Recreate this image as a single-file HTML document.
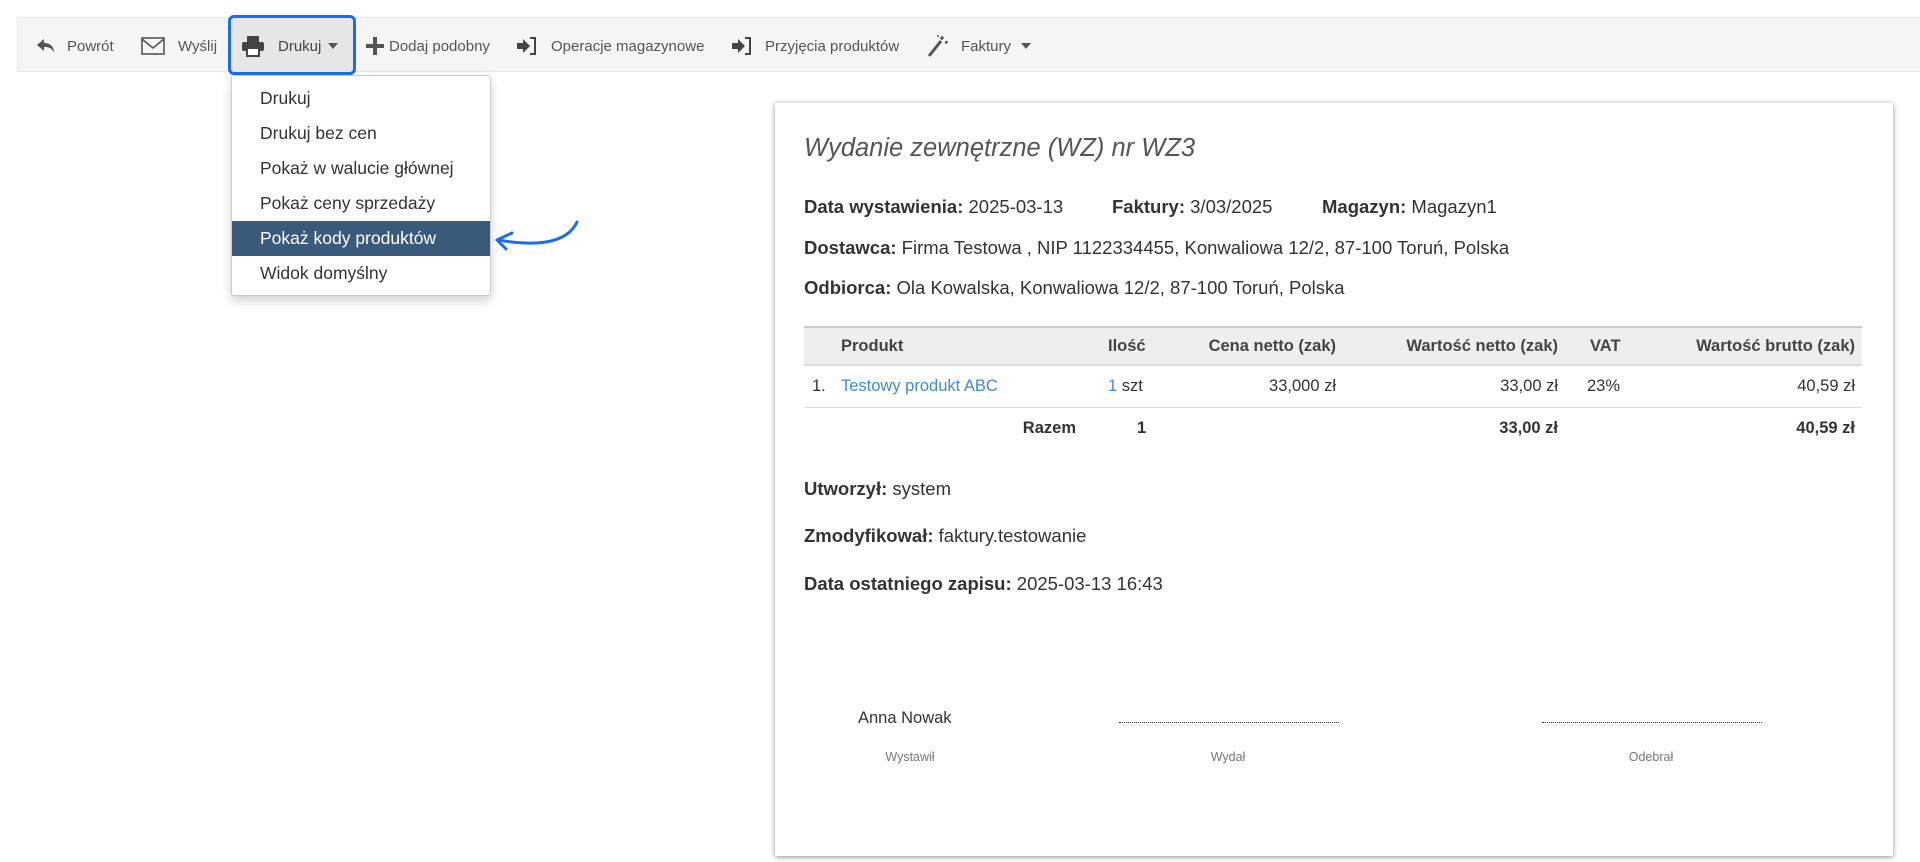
<!DOCTYPE html>
<html><head><meta charset="utf-8"><style>
*{box-sizing:border-box;margin:0;padding:0}
body{width:1920px;height:862px;background:#fff;font-family:"Liberation Sans",sans-serif;color:#333;position:relative;overflow:hidden}
.a{position:absolute;white-space:nowrap}
.tb{position:absolute;left:17px;top:17px;width:1910px;height:55px;background:#f5f5f5;border:1px solid #e6e6e6}
.t{position:absolute;top:38px;font-size:15px;color:#555;line-height:18px}
.dd{position:absolute;left:231px;top:75px;width:260px;height:221px;background:#fff;border:1px solid #ccc;border-radius:3px;box-shadow:0 5px 10px rgba(0,0,0,.18)}
.di{position:absolute;left:0;width:100%;height:35px;line-height:35px;padding-left:28px;font-size:17.5px;color:#333}
.pn{position:absolute;left:775px;top:103px;width:1118px;height:753px;background:#fff;box-shadow:0 1px 5px rgba(0,0,0,.45)}
.f{font-size:16.5px;line-height:20px}
.g{font-size:18.5px;line-height:20px}
b{font-weight:bold}
</style></head><body>
<div class="tb"></div>
<div class="a" style="left:228px;top:15px;width:128px;height:60px;background:#e6e6e6;border:3px solid #1a6ee8;border-radius:6px"></div>
<svg class="a" style="left:36px;top:37px" width="20" height="18" viewBox="0 0 20 18"><path d="M8 2L1 8l7 6V10c5 0 8 1 10 6 0-6-3-10-10-10z" fill="#555"/></svg>
<div class="t" style="left:67px">Powrót</div>
<svg class="a" style="left:141px;top:37px" width="24" height="18" viewBox="0 0 24 18"><rect x="1" y="1" width="22" height="16" fill="none" stroke="#555" stroke-width="1.6"/><path d="M1 2l11 9 11-9" fill="none" stroke="#555" stroke-width="1.6"/></svg>
<div class="t" style="left:178px">Wyślij</div>
<svg class="a" style="left:241px;top:35px" width="24" height="22" viewBox="0 0 24 22"><rect x="6" y="1" width="12" height="6" fill="#444"/><rect x="1" y="7" width="22" height="9" rx="2" fill="#444"/><rect x="6" y="13" width="12" height="8" fill="#fff" stroke="#444" stroke-width="2"/></svg>
<div class="t" style="left:278px;color:#444">Drukuj</div>
<svg class="a" style="left:328px;top:43px" width="10" height="6"><path d="M0 0h10L5 6z" fill="#555"/></svg>
<svg class="a" style="left:366px;top:37px" width="18" height="18"><path d="M7 0h4v7h7v4h-7v7H7v-7H0V7h7z" fill="#555"/></svg>
<div class="t" style="left:389px">Dodaj podobny</div>
<svg class="a" style="left:516px;top:37px" width="22" height="18" viewBox="0 0 22 18"><path d="M1 6h6V2l7 7-7 7v-4H1z" fill="#444"/><path d="M14 1h5v16h-5" fill="none" stroke="#444" stroke-width="2"/></svg>
<div class="t" style="left:551px">Operacje magazynowe</div>
<svg class="a" style="left:731px;top:37px" width="22" height="18" viewBox="0 0 22 18"><path d="M1 6h6V2l7 7-7 7v-4H1z" fill="#444"/><path d="M14 1h5v16h-5" fill="none" stroke="#444" stroke-width="2"/></svg>
<div class="t" style="left:765px">Przyjęcia produktów</div>
<svg class="a" style="left:926px;top:34px" width="24" height="24" viewBox="0 0 24 24"><path d="M3 22L15 7" stroke="#555" stroke-width="3"/><path d="M16 2v4M14 4h4M20 7v3M19 8h3M12 1v2" stroke="#555" stroke-width="1.5"/></svg>
<div class="t" style="left:961px">Faktury</div>
<svg class="a" style="left:1021px;top:43px" width="10" height="6"><path d="M0 0h10L5 6z" fill="#555"/></svg>

<div class="dd">
<div class="di" style="top:5px">Drukuj</div>
<div class="di" style="top:40px">Drukuj bez cen</div>
<div class="di" style="top:75px">Pokaż w walucie głównej</div>
<div class="di" style="top:110px">Pokaż ceny sprzedaży</div>
<div class="di" style="top:145px;background:#3a5a7c;color:#fff">Pokaż kody produktów</div>
<div class="di" style="top:180px">Widok domyślny</div>
</div>
<svg class="a" style="left:490px;top:215px" width="95" height="40"><path d="M87 7C80 22 60 34 8 25" fill="none" stroke="#1a6ee8" stroke-width="3" stroke-linecap="round"/><path d="M22 18L7 25l9 9" fill="none" stroke="#1a6ee8" stroke-width="3" stroke-linecap="round" stroke-linejoin="round"/></svg>

<div class="pn"></div>
<div class="a" style="left:804px;top:134px;font-size:25.5px;font-style:italic;color:#555">Wydanie zewnętrzne (WZ) nr WZ3</div>
<div class="a g" style="left:804px;top:197px"><b>Data wystawienia:</b> 2025-03-13</div>
<div class="a g" style="left:1112px;top:197px"><b>Faktury:</b> 3/03/2025</div>
<div class="a g" style="left:1322px;top:197px"><b>Magazyn:</b> Magazyn1</div>
<div class="a g" style="left:804px;top:238px"><b>Dostawca:</b> Firma Testowa , NIP 1122334455, Konwaliowa 12/2, 87-100 Toruń, Polska</div>
<div class="a g" style="left:804px;top:278px"><b>Odbiorca:</b> Ola Kowalska, Konwaliowa 12/2, 87-100 Toruń, Polska</div>
<div class="a" style="left:804px;top:326px;width:1058px;height:40px;background:#eee;border-top:2px solid #ccc;border-bottom:2px solid #ddd"></div>
<div class="a" style="left:804px;top:407px;width:1058px;height:1px;background:#ddd"></div>
<div class="a f" style="left:841px;top:336px;font-weight:bold;color:#444">Produkt</div>
<div class="a f" style="left:1108px;top:336px;font-weight:bold;color:#444">Ilość</div>
<div class="a f" style="right:584px;top:336px;font-weight:bold;color:#444">Cena netto (zak)</div>
<div class="a f" style="right:362px;top:336px;font-weight:bold;color:#444">Wartość netto (zak)</div>
<div class="a f" style="left:1590px;top:336px;font-weight:bold;color:#444">VAT</div>
<div class="a f" style="right:65px;top:336px;font-weight:bold;color:#444">Wartość brutto (zak)</div>
<div class="a f" style="left:812px;top:376px">1.</div>
<div class="a f" style="left:841px;top:376px;color:#428bca">Testowy produkt ABC</div>
<div class="a f" style="left:1108px;top:376px"><span style="color:#428bca">1</span> szt</div>
<div class="a f" style="right:584px;top:376px">33,000 zł</div>
<div class="a f" style="right:362px;top:376px">33,00 zł</div>
<div class="a f" style="left:1587px;top:376px">23%</div>
<div class="a f" style="right:65px;top:376px">40,59 zł</div>
<div class="a f" style="right:844px;top:418px;font-weight:bold">Razem</div>
<div class="a f" style="left:1137px;top:418px;font-weight:bold">1</div>
<div class="a f" style="right:362px;top:418px;font-weight:bold">33,00 zł</div>
<div class="a f" style="right:65px;top:418px;font-weight:bold">40,59 zł</div>
<div class="a g" style="left:804px;top:479px"><b>Utworzył:</b> system</div>
<div class="a g" style="left:804px;top:526px"><b>Zmodyfikował:</b> faktury.testowanie</div>
<div class="a g" style="left:804px;top:574px"><b>Data ostatniego zapisu:</b> 2025-03-13 16:43</div>
<div class="a f" style="left:858px;top:708px">Anna Nowak</div>
<div class="a" style="left:1119px;top:722px;width:220px;border-top:1.5px dotted #333"></div>
<div class="a" style="left:1542px;top:722px;width:220px;border-top:1.5px dotted #333"></div>
<div class="a" style="left:880px;top:750px;font-size:12.5px;color:#777;width:60px;text-align:center">Wystawił</div>
<div class="a" style="left:1198px;top:750px;font-size:12.5px;color:#777;width:60px;text-align:center">Wydał</div>
<div class="a" style="left:1621px;top:750px;font-size:12.5px;color:#777;width:60px;text-align:center">Odebrał</div>
</body></html>
